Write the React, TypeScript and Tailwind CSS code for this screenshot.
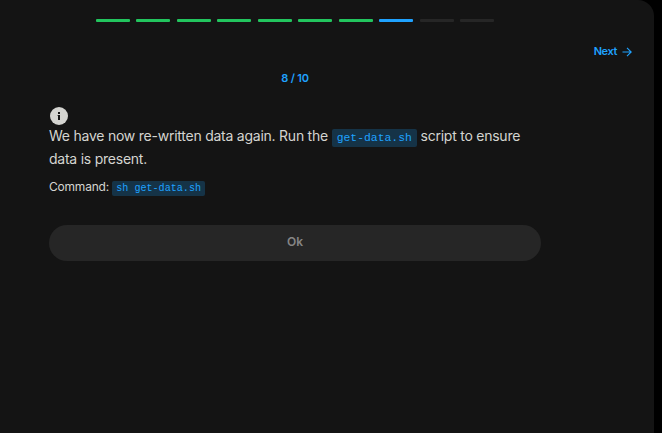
const steps = ["done", "done", "done", "done", "done", "done", "done", "current", "todo", "todo"];

const colors: Record<string, string> = {
  done: "bg-[#22c55e]",
  current: "bg-[#1fa2ff]",
  todo: "bg-[#262626]",
};

function Progress() {
  return (
    <div className="mt-[19px] ml-24 flex w-[398px] justify-between">
      {steps.map((s, i) => (
        <div key={i} className={`h-[3px] w-[34px] rounded-[1px] ${colors[s]}`} />
      ))}
    </div>
  );
}

function InfoIcon() {
  return (
    <svg className="ml-px block size-[18px]" viewBox="0 0 18 18">
      <circle cx="9" cy="9" r="9" fill="#d4d4d0" />
      <rect x="8" y="5" width="2" height="2" fill="#141414" />
      <path d="M7.5 8H10v5H8V8.8h-.5z" fill="#141414" />
    </svg>
  );
}

function ArrowIcon() {
  return (
    <svg className="size-[10px]" viewBox="0 0 10 10" fill="none" stroke="currentColor" strokeWidth="1.1">
      <path d="M0.5 5h8.6M5 0.8L9.2 5L5 9.2" />
    </svg>
  );
}

export default function App() {
  return (
    <div className="h-[433px] w-[662px] overflow-hidden bg-black font-['Inter',sans-serif] text-[#d4d4d0]">
      <div className="flex h-full w-[654px] flex-col rounded-tr-[16px] bg-[#141414]">
        <Progress />
        <a className="mt-[21px] mr-[22px] flex h-[18px] items-center gap-[5px] self-end text-[11px] leading-4 font-semibold tracking-[-0.4px] text-[#1fa2ff]">
          <span className="pb-[2px]">Next</span>
          <ArrowIcon />
        </a>
        <main className="ml-[49px] w-[492px]">
          <div className="mt-[9px] text-center text-[11px] leading-4 font-semibold tracking-[-0.2px] text-[#1fa2ff]">8 / 10</div>
          <div className="mt-[21px]">
            <InfoIcon />
          </div>
          <p className="-mt-px text-[14px] leading-[23px] tracking-[-0.24px]">
            We have now re-written data again. Run the{" "}
            <code className="rounded-[2px] bg-[#153347] px-[5px] py-[3px] font-['Liberation_Mono',monospace] text-[11.4px] leading-none tracking-normal text-[#1fa2ff]">
              get-data.sh
            </code>{" "}
            script to ensure data is present.
          </p>
          <p className="mt-[7px] text-[12px] leading-5 tracking-[-0.2px]">
            Command:{" "}
            <code className="rounded-[2px] bg-[#153347] px-1 py-[2px] font-['Liberation_Mono',monospace] text-[10.1px] leading-none tracking-normal text-[#1fa2ff]">
              sh get-data.sh
            </code>
          </p>
          <button className="mt-[28px] block h-9 w-full rounded-full bg-[#262626] pb-[2px] text-[12px] font-semibold tracking-[-0.1px] text-[#858585]">
            Ok
          </button>
        </main>
      </div>
    </div>
  );
}
